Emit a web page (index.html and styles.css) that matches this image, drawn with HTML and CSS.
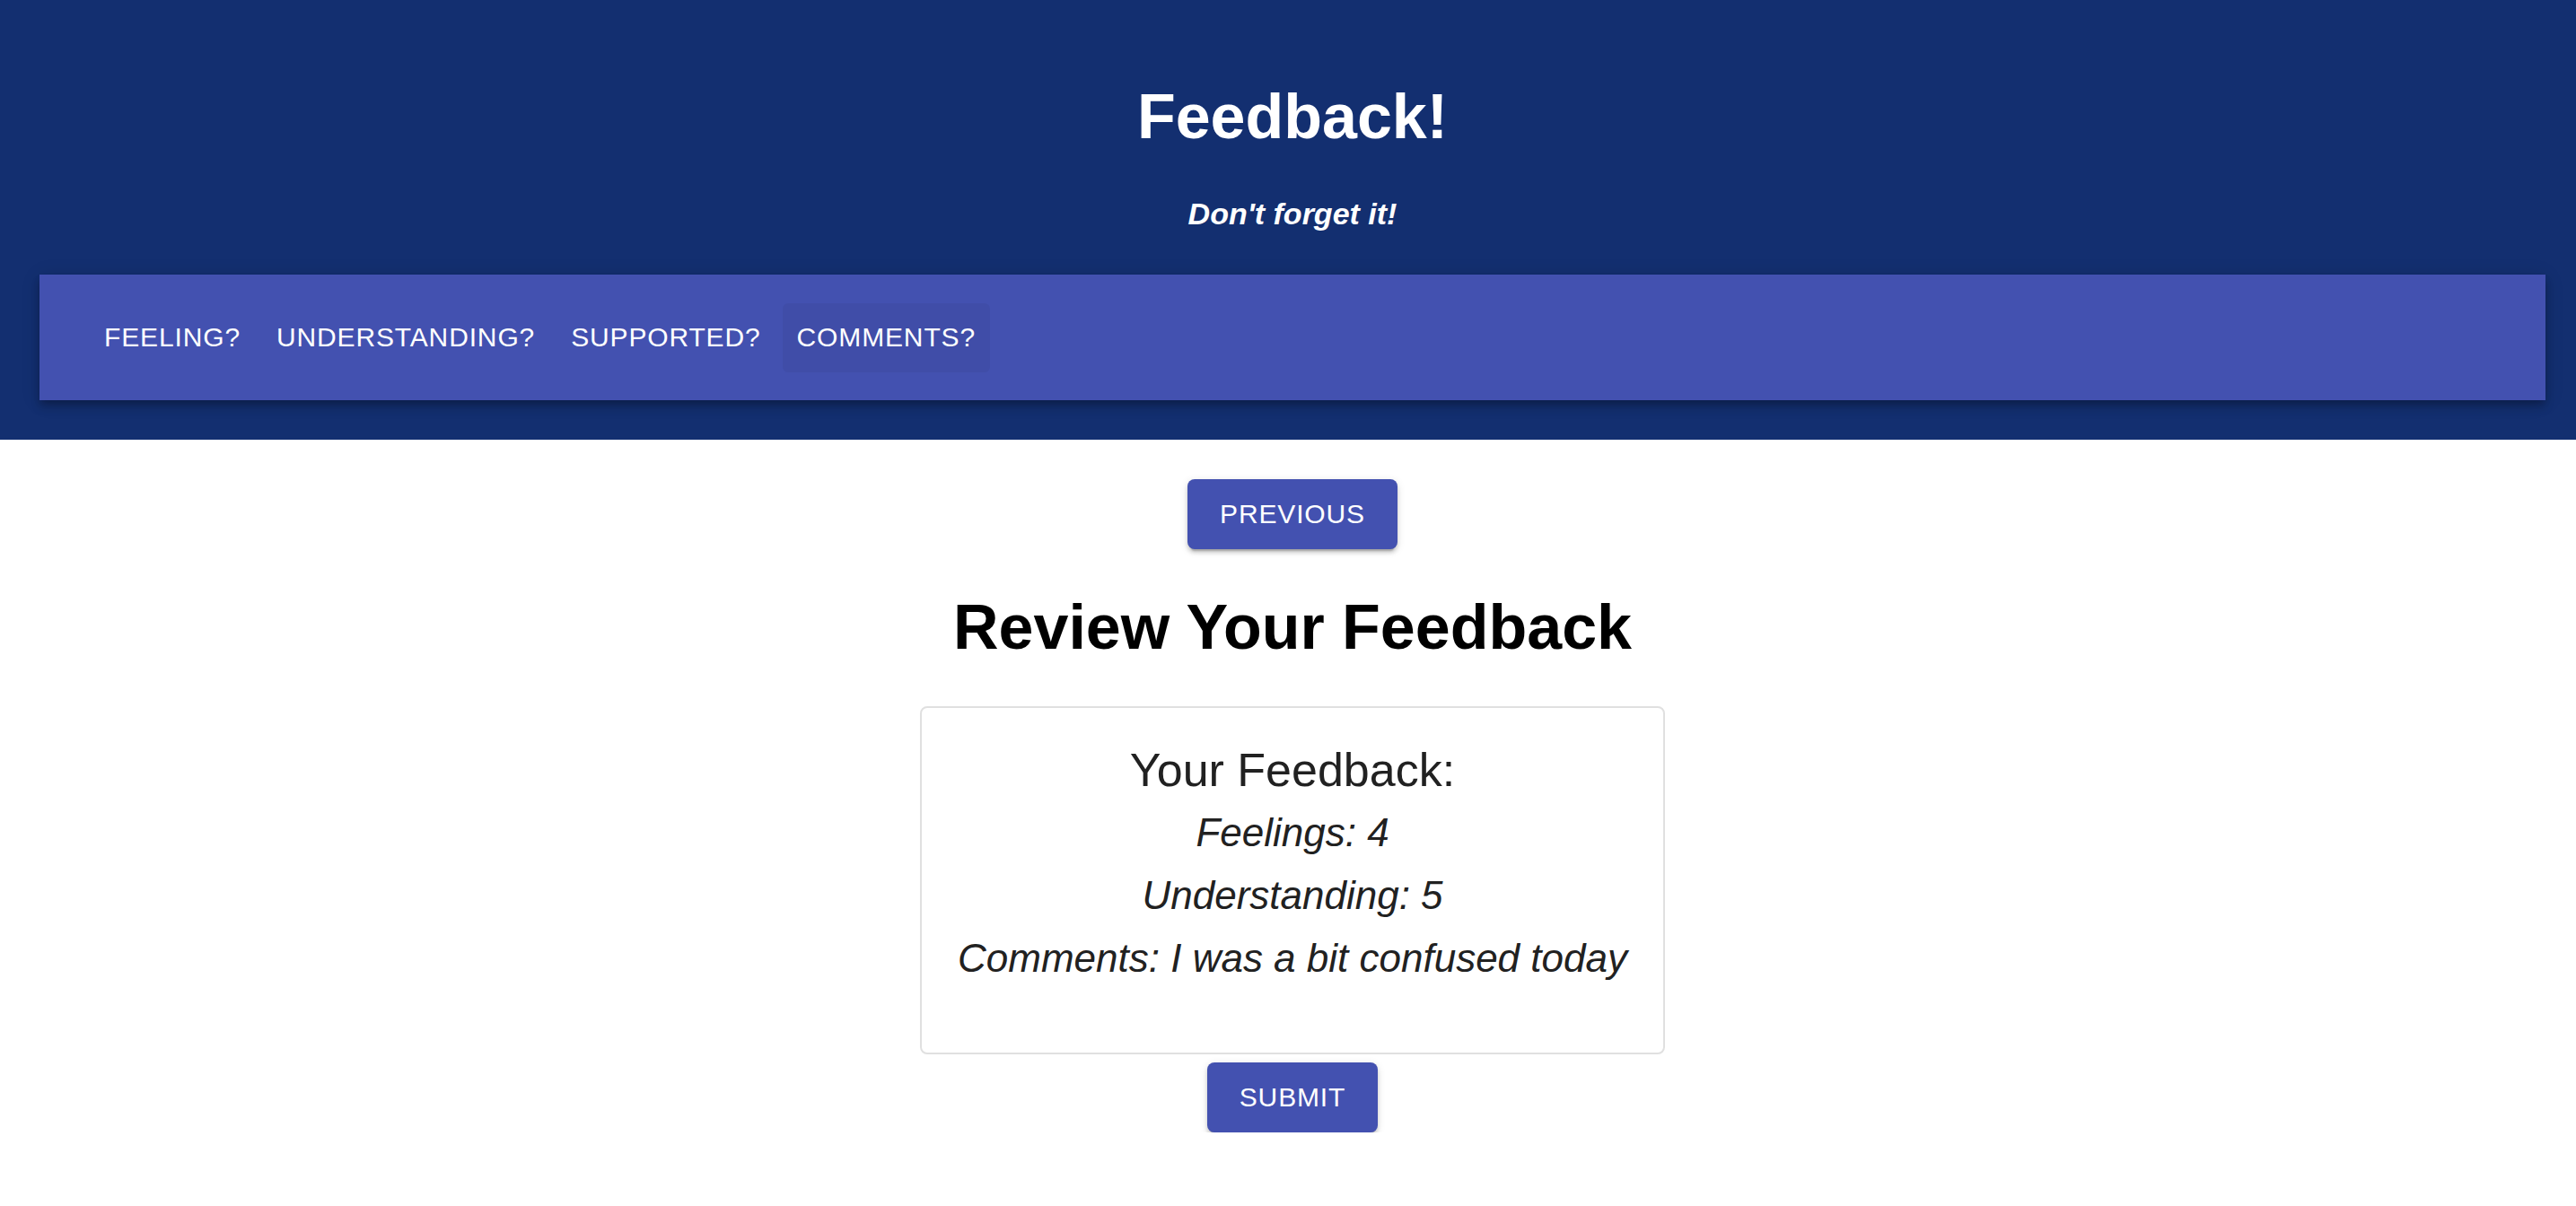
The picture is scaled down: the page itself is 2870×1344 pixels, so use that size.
FILE: index.html
```html
<!DOCTYPE html>
<html lang="en">
<head>
<meta charset="utf-8">
<title>Feedback!</title>
<link rel="stylesheet" href="styles.css">
</head>
<body>
<div class="app">
  <header class="hero">
    <h1 class="title">Feedback!</h1>
    <p class="tagline">Don't forget it!</p>
    <nav class="tabs">
      <button class="tab">Feeling?</button>
      <button class="tab">Understanding?</button>
      <button class="tab">Supported?</button>
      <button class="tab tab-active">Comments?</button>
    </nav>
  </header>
  <main class="review">
    <button class="btn">Previous</button>
    <h2 class="review-title">Review Your Feedback</h2>
    <section class="card">
      <h3 class="card-title">Your Feedback:</h3>
      <p class="card-line">Feelings: 4</p>
      <p class="card-line">Understanding: 5</p>
      <p class="card-line">Comments: I was a bit confused today</p>
    </section>
    <button class="btn btn-submit">Submit</button>
  </main>
</div>
</body>
</html>
```
FILE: styles.css
```css
html, body {
  margin: 0;
  padding: 0;
  overflow: hidden;
  background: #ffffff;
}

body {
  font-family: "Liberation Sans", Arial, Helvetica, sans-serif;
  color: #000;
}

.app {
  width: 2880px;
}

.hero {
  background: #132f70;
  padding: 90px 44px 44px;
  display: flex;
  flex-direction: column;
  align-items: stretch;
  text-align: center;
  color: #fff;
}

.title {
  margin: 0 0 48px;
  font-size: 70px;
  line-height: 80px;
  font-weight: 700;
}

.tagline {
  margin: 0 0 48px;
  font-size: 34px;
  line-height: 40px;
  font-weight: 700;
  font-style: italic;
}

.tabs {
  height: 140px;
  background: #4351b0;
  display: flex;
  align-items: center;
  gap: 8px;
  padding-left: 56px;
  box-shadow: 0 4px 8px -2px rgba(0,0,0,0.2), 0 8px 10px 0 rgba(0,0,0,0.14), 0 2px 20px 0 rgba(0,0,0,0.12);
}

.tab {
  height: 77px;
  padding: 0 16px;
  border: none;
  border-radius: 6px;
  background: transparent;
  color: #fff;
  font-family: "Liberation Sans", Arial, Helvetica, sans-serif;
  font-size: 30px;
  letter-spacing: 0.86px;
  text-transform: uppercase;
  cursor: pointer;
}

.tab-active {
  background: rgba(0, 0, 0, 0.045);
}

.review {
  display: flex;
  flex-direction: column;
  align-items: center;
  padding-top: 44px;
}

.btn {
  height: 78px;
  padding: 0 36px;
  border: none;
  border-radius: 8px;
  background: #4351b0;
  color: #fff;
  font-family: "Liberation Sans", Arial, Helvetica, sans-serif;
  font-size: 30px;
  letter-spacing: 0.86px;
  text-transform: uppercase;
  box-shadow: 0 6px 2px -4px rgba(0,0,0,0.2), 0 4px 4px 0 rgba(0,0,0,0.14), 0 2px 10px 0 rgba(0,0,0,0.12);
  cursor: pointer;
}

.review-title {
  margin: 47px 0 0;
  font-size: 70px;
  line-height: 80px;
  font-weight: 700;
  color: #000;
}

.card {
  margin-top: 48px;
  width: 830px;
  box-sizing: border-box;
  border: 2px solid #e0e0e0;
  border-radius: 8px;
  padding: 39px 20px 70px;
  text-align: center;
  color: #212121;
}

.card-title {
  margin: 0 0 5px;
  font-size: 52px;
  line-height: 60px;
  font-weight: 400;
}

.card-line {
  margin: 0;
  font-size: 44px;
  line-height: 70px;
  font-style: italic;
}

.btn-submit {
  margin-top: 9px;
}
```
